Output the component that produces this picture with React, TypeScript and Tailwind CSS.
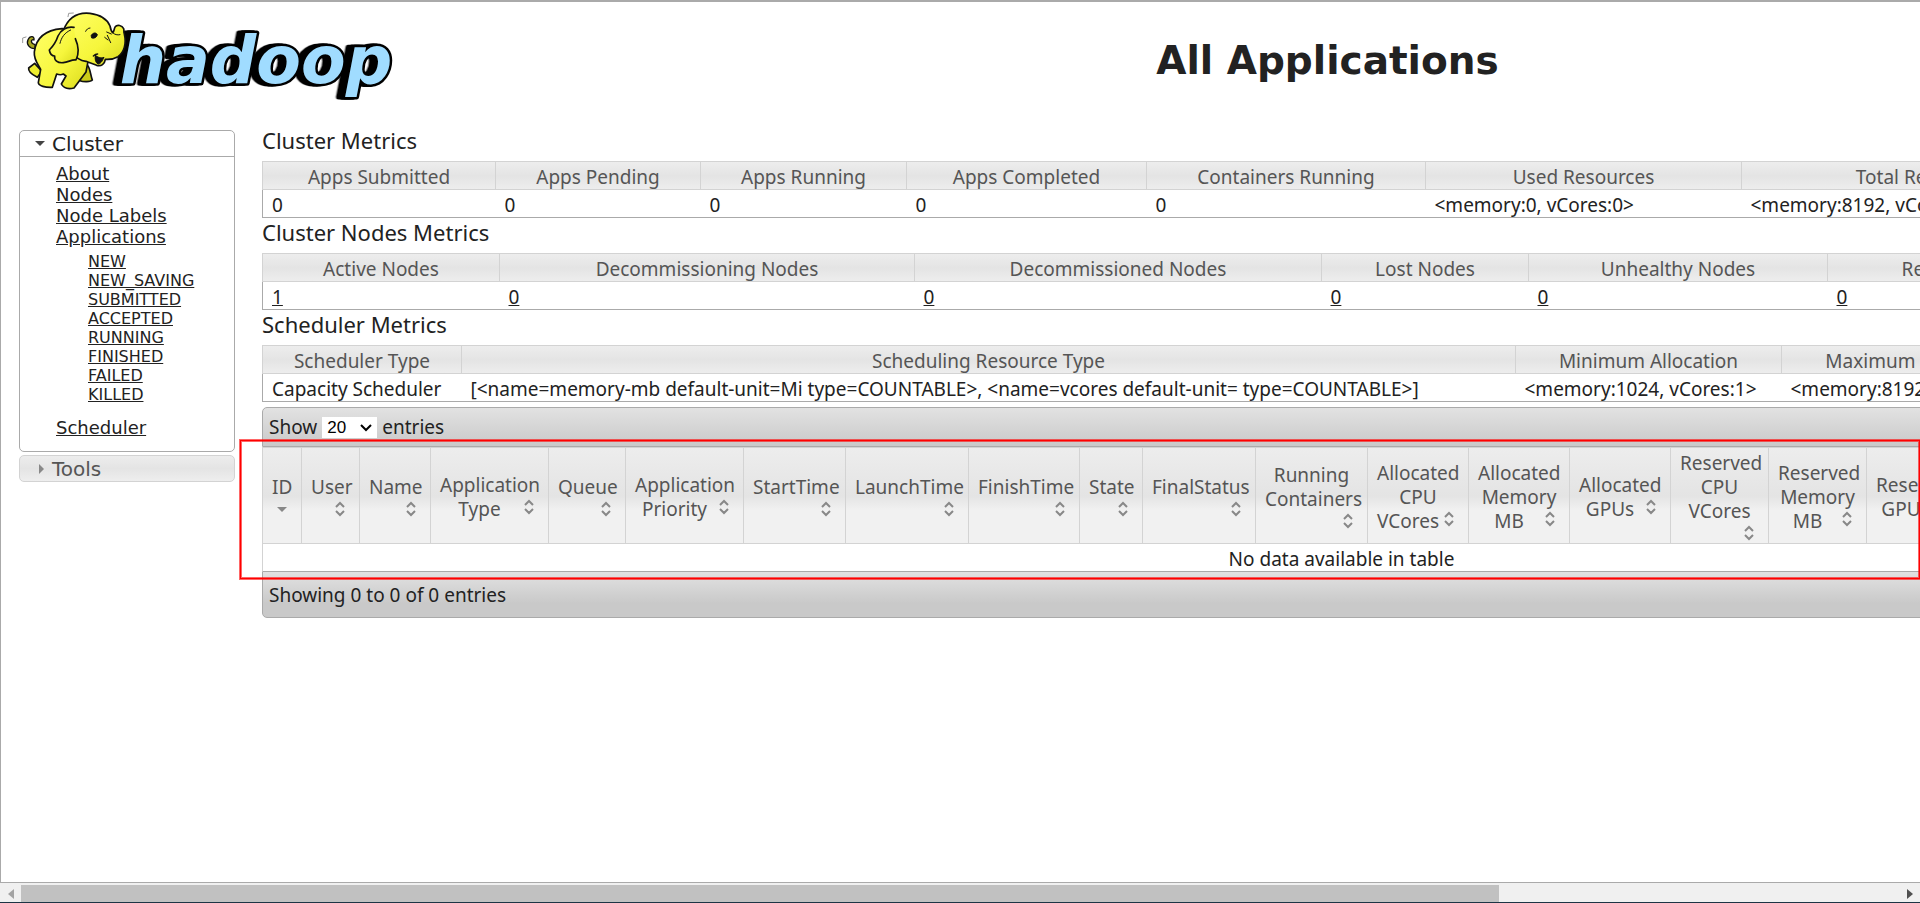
import { Fragment } from "react";

interface Column {
  label: string;
  width: number;
}

interface MetricsTableProps {
  title: string;
  width: string;
  columns: Column[];
  values: string[];
  linked?: boolean;
}

const clusterColumns: Column[] = [
  { label: "Apps Submitted", width: 233 },
  { label: "Apps Pending", width: 205 },
  { label: "Apps Running", width: 206 },
  { label: "Apps Completed", width: 240 },
  { label: "Containers Running", width: 279 },
  { label: "Used Resources", width: 316 },
  { label: "Total Resources", width: 368 },
  { label: "Reserved Resources", width: 311 },
];

const nodeColumns: Column[] = [
  { label: "Active Nodes", width: 237 },
  { label: "Decommissioning Nodes", width: 415 },
  { label: "Decommissioned Nodes", width: 407 },
  { label: "Lost Nodes", width: 207 },
  { label: "Unhealthy Nodes", width: 299 },
  { label: "Rebooted Nodes", width: 297 },
  { label: "Shutdown Nodes", width: 296 },
];

const schedulerColumns: Column[] = [
  { label: "Scheduler Type", width: 199 },
  { label: "Scheduling Resource Type", width: 1054 },
  { label: "Minimum Allocation", width: 266 },
  { label: "Maximum Allocation", width: 271 },
  { label: "Maximum Cluster Application Priority", width: 368 },
];

const appColumns: Column[] = [
  { label: "ID", width: 39 },
  { label: "User", width: 58 },
  { label: "Name", width: 71 },
  { label: "Application|Type", width: 118 },
  { label: "Queue", width: 77 },
  { label: "Application|Priority", width: 118 },
  { label: "StartTime", width: 102 },
  { label: "LaunchTime", width: 123 },
  { label: "FinishTime", width: 111 },
  { label: "State", width: 63 },
  { label: "FinalStatus", width: 113 },
  { label: "Running|Containers", width: 112 },
  { label: "Allocated|CPU|VCores", width: 101 },
  { label: "Allocated|Memory|MB", width: 101 },
  { label: "Allocated|GPUs", width: 101 },
  { label: "Reserved|CPU|VCores", width: 98 },
  { label: "Reserved|Memory|MB", width: 98 },
  { label: "Reserved|GPUs", width: 98 },
  { label: "% of|Queue", width: 80 },
  { label: "% of|Cluster", width: 80 },
  { label: "Progress", width: 96 },
  { label: "Tracking UI", width: 110 },
  { label: "Blacklisted|Nodes", width: 90 },
];

const appStates = [
  "NEW",
  "NEW_SAVING",
  "SUBMITTED",
  "ACCEPTED",
  "RUNNING",
  "FINISHED",
  "FAILED",
  "KILLED",
];

function Logo() {
  return (
    <svg
      viewBox="60 27 1140 285"
      className="w-[380px] h-[95px]"
      role="img"
      aria-label="hadoop"
    >
      <defs>
        <linearGradient id="skin" x1="0" y1="0" x2="1" y2="1">
          <stop offset="0" stopColor="#ffff66" />
          <stop offset="0.6" stopColor="#f6f63c" />
          <stop offset="1" stopColor="#d9d91c" />
        </linearGradient>
      </defs>
      <text
        x="359"
        y="250"
        fill="#a0dcff"
        stroke="#000"
        strokeWidth="15"
        strokeLinejoin="round"
        paintOrder="stroke"
        fontFamily="'DejaVu Sans', Verdana, sans-serif"
        fontSize="195"
        fontWeight="bold"
        fontStyle="italic"
        className="[filter:drop-shadow(-10px_0_0_#000)_drop-shadow(-10px_0_0_#000)]"
      >
        hadoop
      </text>
      <g stroke="#111" strokeWidth="5" strokeLinecap="round" strokeLinejoin="round">
        {/* motion marks */}
        <path d="M204 50 L206 40 L220 39 M68 128 L68 114 L78 111" fill="none" stroke="#999" strokeWidth="3" />
        {/* tail */}
        <path d="M106 146 C88 147 78 132 84 119 C90 106 104 108 102 120 C92 116 90 130 105 134 Z" fill="#a8a820" strokeWidth="4" />
        {/* far legs */}
        <path d="M104 190 L86 204 C84 214 96 224 112 232 L126 214 Z" fill="#eded30" />
        <path d="M258 190 C272 202 270 222 277 240 C272 246 250 246 240 242 L226 218 Z" fill="#caca18" />
        {/* body */}
        <path
          d="M186 86 C140 90 108 112 103 156 C101 178 112 190 122 208 L115 248 C116 258 136 263 157 262 L170 222 C178 225 184 225 190 222 L198 228 L184 252 C190 264 204 268 222 264 L258 216 L264 184 L240 90 Z"
          fill="url(#skin)"
        />
        {/* head and trunk */}
        <path
          d="M190 92 C204 54 232 36 270 40 C300 44 322 58 330 78 C332 88 334 94 338 98 C343 94 341 88 346 80 C352 73 366 76 371 86 C373 92 370 94 373 102 C380 132 372 158 354 170 C340 178 328 179 316 178 C314 192 304 200 290 196 C276 190 266 188 258 184 C242 182 228 174 220 160 Z"
          fill="url(#skin)"
        />
        {/* ear */}
        <path
          d="M222 82 C200 78 182 90 174 108 C168 126 158 140 148 150 C150 162 156 168 164 168 C162 180 172 190 190 188 C206 186 216 178 228 180 C238 160 234 134 226 116"
          fill="url(#skin)"
        />
        <path d="M180 130 C184 112 194 98 212 90" fill="none" strokeWidth="3" />
        {/* mouth */}
        <path d="M286 166 C284 176 286 188 294 192 C306 190 308 178 312 172 C302 176 294 172 286 166 Z" fill="#111" strokeWidth="3" />
        <path d="M280 168 C284 164 288 162 293 162" fill="none" strokeWidth="4" />
        {/* eyes and brow */}
        <path d="M274 106 C278 98 288 96 292 104 C290 112 284 116 276 114 Z" fill="#111" strokeWidth="3" />
        <path d="M257 94 C260 88 264 84 270 84 M320 96 L334 102 M314 112 L324 120 M322 106 L332 128 M338 98 C344 104 352 106 360 104" fill="none" strokeWidth="3" />
      </g>
    </svg>
  );
}

function SortIcon({ active }: { active?: boolean }) {
  return (
    <svg viewBox="0 0 20 20" className="float-right w-5 h-5" aria-hidden="true">
      {active ? (
        <path d="M5 8h10l-5 5z" fill="#888" />
      ) : (
        <path
          d="M6 8l4-4 4 4M6 12l4 4 4-4"
          fill="none"
          stroke="#888"
          strokeWidth="2"
        />
      )}
    </svg>
  );
}

function MetricsTable({ title, width, columns, values, linked }: MetricsTableProps) {
  return (
    <section>
      <h2 className="mb-[7px] text-[22px] leading-7">{title}</h2>
      <table
        className={`table-fixed border-collapse border border-[#aaa] whitespace-nowrap leading-6 ${width}`}
      >
        <colgroup>
          {columns.map((col) => (
            <col key={col.label} style={{ width: col.width }} />
          ))}
        </colgroup>
        <thead>
          <tr className="h-7 bg-linear-to-b from-[#ededed] via-[#e4e4e4] to-[#eee] text-[#555]">
            {columns.map((col) => (
              <th key={col.label} className="border border-[#d3d3d3] p-0 pt-[3px] font-normal">
                {col.label}
              </th>
            ))}
          </tr>
        </thead>
        <tbody>
          <tr className="h-7">
            {columns.map((col, i) => (
              <td key={col.label} className="px-[9px] pt-[3px] pb-0">
                {linked ? (
                  <a href="#" className="underline">
                    {values[i]}
                  </a>
                ) : (
                  values[i]
                )}
              </td>
            ))}
          </tr>
        </tbody>
      </table>
    </section>
  );
}

function Sidebar() {
  return (
    <nav className="w-[216px] shrink-0 pt-1 font-['DejaVu_Sans',Verdana,sans-serif]">
      <div className="rounded-[5px] border border-[#aaa]">
        <h3 className="flex h-[26px] items-center border-b border-[#aaa] text-xl">
          <svg viewBox="0 0 20 20" className="ml-[10px] mr-[2px] w-5 h-5" aria-hidden="true">
            <path d="M5 7h10l-5 5z" fill="#444" />
          </svg>
          Cluster
        </h3>
        <ul className="pt-[6px] pb-[5px] pl-9 text-lg leading-[21px]">
          <li><a href="#" className="underline">About</a></li>
          <li><a href="#" className="underline">Nodes</a></li>
          <li><a href="#" className="underline">Node Labels</a></li>
          <li>
            <a href="#" className="underline">Applications</a>
            <ul className="py-[5px] pl-8 text-base leading-[19px]">
              {appStates.map((state) => (
                <li key={state}>
                  <a href="#" className="underline">{state}</a>
                </li>
              ))}
            </ul>
          </li>
          <li className="py-2"><a href="#" className="underline">Scheduler</a></li>
        </ul>
      </div>
      <h3 className="mt-[3px] flex h-[27px] items-center rounded-[5px] border border-[#d3d3d3] bg-linear-to-b from-[#ededed] via-[#e4e4e4] to-[#eee] text-xl text-[#555]">
        <svg viewBox="0 0 20 20" className="ml-[10px] mr-[2px] w-5 h-5" aria-hidden="true">
          <path d="M9 5v10l5-5z" fill="#888" />
        </svg>
        Tools
      </h3>
    </nav>
  );
}

function Applications() {
  return (
    <section className="relative mt-[5px]">
      <div className="flex h-10 w-[2158px] items-center rounded-t-[5px] border border-[#aaa] bg-linear-to-b from-[#e2e2e2] to-[#c9c9c9] px-[6px]">
        <label className="flex items-center gap-[5px]">
          Show
          <span className="relative flex">
            <select
              defaultValue="20"
              className="h-[21px] w-[55px] appearance-none bg-white pl-[5px] font-['Liberation_Sans',Arial,sans-serif] text-[17px] leading-[21px] text-black"
            >
              <option>20</option>
              <option>40</option>
              <option>60</option>
              <option>80</option>
              <option>100</option>
            </select>
            <svg
              viewBox="0 0 12 8"
              className="pointer-events-none absolute right-[5px] top-[7px] h-2 w-3"
              aria-hidden="true"
            >
              <path d="M1 1l5 5 5-5" fill="none" stroke="#000" strokeWidth="2" />
            </svg>
          </span>
          entries
        </label>
      </div>
      <table className="w-[2158px] table-fixed border-collapse border-x border-[#d3d3d3] leading-6">
        <colgroup>
          {appColumns.map((col) => (
            <col key={col.label} style={{ width: col.width }} />
          ))}
        </colgroup>
        <thead>
          <tr className="h-24 bg-linear-to-b from-[#ededed] via-[#e4e4e4] via-50% to-[#f1f1f1] to-65% text-[#555]">
            {appColumns.map((col, i) => (
              <th
                key={col.label}
                className="border border-[#d3d3d3] px-[9px] pt-[2px] pb-0 font-normal"
              >
                {col.label.split("|").map((line, n) => (
                  <Fragment key={line}>
                    {n > 0 && <br />}
                    {line}
                  </Fragment>
                ))}
                <SortIcon active={i === 0} />
              </th>
            ))}
          </tr>
        </thead>
        <tbody>
          <tr className="h-[27px]">
            <td colSpan={appColumns.length} className="p-0 pt-[3px] text-center">
              No data available in table
            </td>
          </tr>
        </tbody>
      </table>
      <div className="h-[47px] w-[2158px] rounded-b-[5px] border border-[#aaa] bg-linear-to-b from-[#e2e2e2] to-[#c9c9c9] to-70% px-[6px] pt-[10px]">
        Showing 0 to 0 of 0 entries
      </div>
      {/* highlight frame over the applications list */}
      <div className="pointer-events-none absolute top-[33px] right-0 bottom-[39px] -left-[22px] border border-[#f00] shadow-[0_0_0_1px_#ff000099,inset_0_0_0_1px_#ff000099]" />
    </section>
  );
}

function Scrollbar() {
  return (
    <div className="flex h-5 shrink-0 items-center border-b border-[#1c3444] bg-[#f0f0f0] pt-[2px]">
      <button type="button" aria-label="Scroll left" className="flex w-[21px] shrink-0 justify-center">
        <svg viewBox="0 0 6 10" className="h-[10px] w-[6px]">
          <path d="M6 0v10L0 5z" fill="#a3a3a3" />
        </svg>
      </button>
      <div className="flex h-full flex-1">
        <div className="flex-[37] bg-[#c1c1c1]" />
        <div className="flex-[10]" />
      </div>
      <button type="button" aria-label="Scroll right" className="flex w-[21px] shrink-0 justify-center">
        <svg viewBox="0 0 6 10" className="h-[10px] w-[6px]">
          <path d="M0 0v10l6-5z" fill="#505050" />
        </svg>
      </button>
    </div>
  );
}

export default function App() {
  return (
    <div className="flex h-screen flex-col bg-white font-['Noto_Sans','Segoe_UI',sans-serif] text-[19px] leading-[27px] text-[#222]">
      <div className="min-h-0 flex-1 overflow-hidden border-t-2 border-b border-l border-[#aaa]">
        <header className="flex h-[124px] w-[2420px] pl-[19px] pt-[7px]">
          <Logo />
          <h1 className="flex-1 pt-7 pr-[166px] text-center font-['DejaVu_Sans',Verdana,sans-serif] text-[39px] leading-[48px] font-bold">
            All Applications
          </h1>
        </header>
        <div className="flex gap-[27px] pl-[18px]">
          <Sidebar />
          <main className="min-w-0 flex-1">
            <MetricsTable
              title="Cluster Metrics"
              width="w-[2158px]"
              columns={clusterColumns}
              values={[
                "0",
                "0",
                "0",
                "0",
                "0",
                "<memory:0, vCores:0>",
                "<memory:8192, vCores:8>",
                "<memory:0, vCores:0>",
              ]}
            />
            <MetricsTable
              title="Cluster Nodes Metrics"
              width="w-[2158px]"
              columns={nodeColumns}
              values={["1", "0", "0", "0", "0", "0", "0"]}
              linked
            />
            <MetricsTable
              title="Scheduler Metrics"
              width="w-[2158px]"
              columns={schedulerColumns}
              values={[
                "Capacity Scheduler",
                "[<name=memory-mb default-unit=Mi type=COUNTABLE>, <name=vcores default-unit= type=COUNTABLE>]",
                "<memory:1024, vCores:1>",
                "<memory:8192, vCores:4>",
                "0",
              ]}
            />
            <Applications />
          </main>
        </div>
      </div>
      <Scrollbar />
    </div>
  );
}
